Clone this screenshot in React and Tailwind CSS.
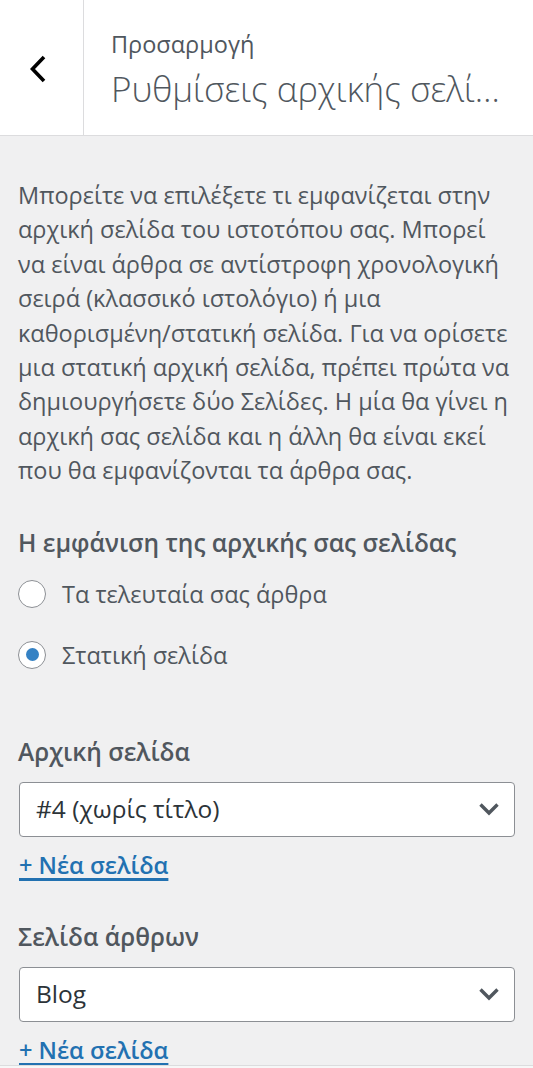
import React, { useState } from 'react'

const Chevron = () => (
  <svg width="18" height="28" viewBox="0 0 18 28" fill="none">
    <path d="M15 2 L3.5 14 L15 26" stroke="#000" strokeWidth="3.6" />
  </svg>
)

const SelectArrow = () => (
  <svg width="20" height="13" viewBox="0 0 20 13" fill="none">
    <path d="M1.5 1.5 L10 10 L18.5 1.5" stroke="#50575e" strokeWidth="3.4" />
  </svg>
)

const Radio = ({ checked, label, onClick }) => (
  <label className="flex items-center gap-[16px] h-[34px] cursor-pointer" onClick={onClick}>
    <span className="w-[28px] h-[28px] rounded-full border border-[#8c8f94] bg-white flex items-center justify-center shrink-0">
      {checked && <span className="w-[13px] h-[13px] rounded-full bg-[#3582c4]" />}
    </span>
    <span className="text-[23.5px] leading-[34px] text-[#50575e]">{label}</span>
  </label>
)

const PageSelect = ({ title, value }) => (
  <div>
    <h3 className="text-[24.5px] font-semibold text-[#50575e] leading-[34px]">{title}</h3>
    <div className="mt-[13px] ml-[1px] h-[55px] w-[496px] bg-white border border-[#8c8f94] rounded-[4px] flex items-center justify-between pl-[16px] pr-[15px]">
      <span className="text-[24.5px] text-[#2c3338]">{value}</span>
      <SelectArrow />
    </div>
    <a href="#" className="inline-block mt-[13px] ml-[1px] text-[23.5px] font-semibold text-[#2271b1] underline underline-offset-[4px] decoration-[2.5px] leading-[30px]">
      + Νέα σελίδα
    </a>
  </div>
)

export default function App() {
  const [front, setFront] = useState('page')

  return (
    <div className="w-[533px] h-[1068px] bg-[#f0f0f1] flex flex-col overflow-hidden font-['Segoe_UI','Open_Sans',sans-serif]">
      <header className="h-[136px] bg-white border-b border-[#dcdcde] flex shrink-0">
        <button className="w-[84px] border-r border-[#dcdcde] flex items-center justify-center pr-[8px] pt-[2px]">
          <Chevron />
        </button>
        <div className="flex-1 min-w-0 pl-[27px] pr-[20px] pt-[29px]">
          <div className="text-[23.5px] text-[#50575e] leading-[30px]">Προσαρμογή</div>
          <h2 className="mt-[8px] text-[35px] font-light text-[#50575e] leading-[44px] truncate">Ρυθμίσεις αρχικής σελίδας</h2>
        </div>
      </header>

      <main className="flex-1 px-[18px] pt-[42px]">
        <p className="text-[23.5px] leading-[34.4px] text-[#50575e]">
          Μπορείτε να επιλέξετε τι εμφανίζεται στην αρχική σελίδα του ιστοτόπου σας. Μπορεί να είναι άρθρα σε αντίστροφη χρονολογική σειρά (κλασσικό ιστολόγιο) ή μια καθορισμένη/στατική σελίδα. Για να ορίσετε μια στατική αρχική σελίδα, πρέπει πρώτα να δημιουργήσετε δύο Σελίδες. Η μία θα γίνει η αρχική σας σελίδα και η άλλη θα είναι εκεί που θα εμφανίζονται τα άρθρα σας.
        </p>

        <h3 className="mt-[38px] text-[24.5px] font-semibold text-[#50575e] leading-[34px]">
          Η εμφάνιση της αρχικής σας σελίδας
        </h3>
        <div className="mt-[17px] flex flex-col gap-[27px]">
          <Radio checked={front === 'posts'} label="Τα τελευταία σας άρθρα" onClick={() => setFront('posts')} />
          <Radio checked={front === 'page'} label="Στατική σελίδα" onClick={() => setFront('page')} />
        </div>

        <div className="mt-[63px]">
          <PageSelect title="Αρχική σελίδα" value="#4 (χωρίς τίτλο)" />
        </div>
        <div className="mt-[40px]">
          <PageSelect title="Σελίδα άρθρων" value="Blog" />
        </div>
      </main>
      <div className="h-[4px] border-t border-[#dcdcde] bg-[#f6f7f7] shrink-0" />
    </div>
  )
}
